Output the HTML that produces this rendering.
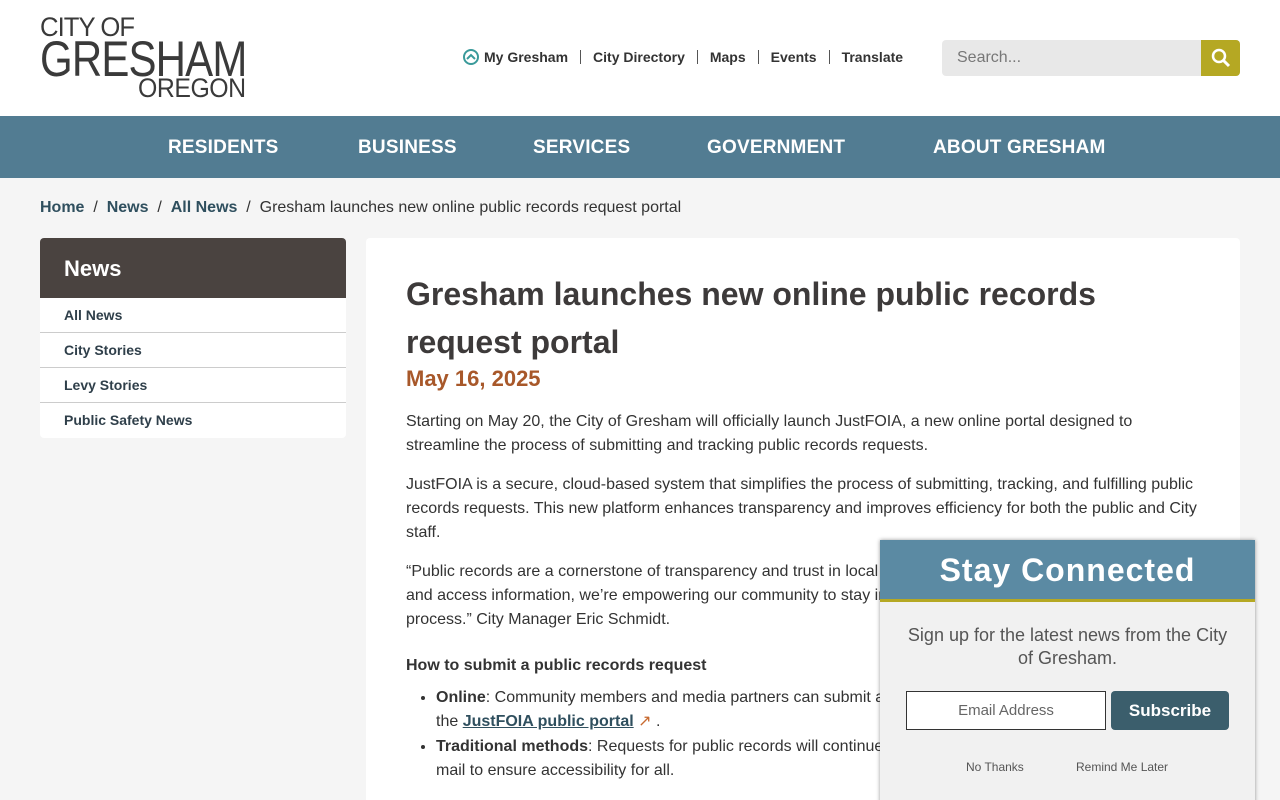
<!DOCTYPE html>
<html><head><meta charset="utf-8"><style>
*{margin:0;padding:0;box-sizing:border-box}
html,body{width:1280px;height:800px;overflow:hidden}
body{background:#f5f5f5;font-family:"Liberation Sans",sans-serif;color:#333;position:relative}
header{height:116px;background:#fff;position:relative}
.logo{position:absolute;left:40px;top:14px;color:#3a3a3a;line-height:1;width:220px}
.logo div{transform-origin:left top;white-space:nowrap}
.util{position:absolute;left:463px;top:49px;font-size:14px;font-weight:bold;color:#333;display:flex;align-items:center}
.util span{padding:0 12px;border-left:1px solid #555;line-height:14px}
.util span:first-child{border:none;padding-left:0}
.search{position:absolute;left:942px;top:40px;width:298px;height:36px;background:#e8e8e8;border-radius:4px}
.search .ph{position:absolute;left:15px;top:9px;color:#777;font-size:16px}
.search .btn{position:absolute;right:0;top:0;width:39px;height:36px;background:#b5a823;border-radius:0 4px 4px 0}
nav{height:62px;background:#527c92;position:relative;color:#fff;font-weight:bold;font-size:19px;letter-spacing:.2px}
nav span{position:absolute;top:0;line-height:64px;white-space:nowrap}
.bc{position:absolute;top:199px;left:40px;font-size:16px;color:#333}
.bc b{color:#2f4f5e}
.side{position:absolute;left:40px;top:238px;width:306px;background:#fff;border-radius:4px;overflow:hidden}
.side h3{background:#4a4340;color:#fff;height:60px;line-height:62px;padding-left:24px;font-size:22px}
.side div{height:35px;line-height:34px;padding-left:24px;font-size:14px;font-weight:bold;color:#2f3f4a;border-bottom:1px solid #ccc}
.side div:last-child{border:none}
.main{position:absolute;left:366px;top:238px;width:874px;height:600px;background:#fff;border-radius:4px;padding:32px 40px}
h1{font-size:32px;line-height:48px;color:#3d3a3a;font-weight:bold;margin-top:0}
.date{color:#a8582a;font-weight:bold;font-size:22px;margin-top:0}
p{font-size:16px;line-height:24px;margin-top:15px;color:#333}
p.first{margin-top:18px}
h4{font-size:16px;margin-top:25px;color:#333}
ul{margin-top:11px;padding-left:30px;font-size:16px;line-height:24px}
li{margin-bottom:1px}
.pop{position:absolute;left:880px;top:540px;width:375px;height:270px;background:#f1f1f1;box-shadow:0 0 4px rgba(0,0,0,.4)}
.pop .hd{height:62px;background:#5b8aa3;border-bottom:3px solid #b5a823;color:#fff;font-size:32px;font-weight:bold;text-align:center;line-height:60px;letter-spacing:1px}
.pop .t{text-align:center;color:#555;font-size:18px;line-height:23px;margin-top:22px;padding:0 20px}
.em{position:absolute;left:26px;top:151px;width:200px;height:39px;background:#fff;border:1px solid #333;text-align:center;line-height:37px;color:#666;font-size:15px}
.sub{position:absolute;left:231px;top:151px;width:118px;height:39px;background:#3b5e6c;border-radius:4px;color:#fff;font-weight:bold;font-size:17px;text-align:center;line-height:39px}
.lk{position:absolute;top:220px;font-size:12px;color:#555}
</style></head><body>
<header>
<div class="logo">
<div style="font-size:27px;letter-spacing:-1px;transform:scaleX(.95)">CITY OF</div>
<div style="font-size:50px;letter-spacing:-1px;margin-top:-7px;transform:scaleX(.84)">GRESHAM</div>
<div style="font-size:27px;margin-left:98px;margin-top:-9px;letter-spacing:-.5px;transform:scaleX(.92)">OREGON</div>
</div>
<div class="util"><span><svg width="16" height="16" viewBox="0 0 16 16" style="vertical-align:-3px;margin-right:5px"><circle cx="8" cy="8" r="7" fill="none" stroke="#3a9a9a" stroke-width="2"/><path d="M4 10l4-4 4 4" fill="none" stroke="#3a9a9a" stroke-width="2"/></svg>My Gresham</span><span>City Directory</span><span>Maps</span><span>Events</span><span>Translate</span></div>
<div class="search"><div class="ph">Search...</div><div class="btn"><svg width="39" height="36" viewBox="0 0 39 36"><circle cx="18" cy="16" r="6" fill="none" stroke="#fff" stroke-width="2.5"/><path d="M22 20l6 6" stroke="#fff" stroke-width="3"/></svg></div></div>
</header>
<nav><span style="left:168px">RESIDENTS</span><span style="left:358px">BUSINESS</span><span style="left:533px">SERVICES</span><span style="left:707px">GOVERNMENT</span><span style="left:933px">ABOUT GRESHAM</span></nav>
<div class="bc"><b>Home</b> &nbsp;/ &nbsp;<b>News</b> &nbsp;/ &nbsp;<b>All News</b> &nbsp;/ &nbsp;Gresham launches new online public records request portal</div>
<div class="side"><h3>News</h3><div>All News</div><div>City Stories</div><div>Levy Stories</div><div>Public Safety News</div></div>
<div class="main">
<h1>Gresham launches new online public records request portal</h1>
<div class="date">May 16, 2025</div>
<p class="first">Starting on May 20, the City of Gresham will officially launch JustFOIA, a new online portal designed to streamline the process of submitting and tracking public records requests.</p>
<p>JustFOIA is a secure, cloud-based system that simplifies the process of submitting, tracking, and fulfilling public records requests. This new platform enhances transparency and improves efficiency for both the public and City staff.</p>
<p>“Public records are a cornerstone of transparency and trust in local government. By making it easier to request and access information, we’re empowering our community to stay informed and engaged in the democratic process.” City Manager Eric Schmidt.</p>
<h4>How to submit a public records request</h4>
<ul><li><b>Online</b>: Community members and media partners can submit and track public records requests through<br>the <b style="color:#2f4f5e;text-decoration:underline">JustFOIA public portal</b> <span style="color:#c86a30">↗</span> .</li>
<li><b>Traditional methods</b>: Requests for public records will continue to be accepted in person, by phone, and by mail to ensure accessibility for all.</li></ul>
</div>
<div class="pop"><div class="hd">Stay Connected</div>
<div class="t">Sign up for the latest news from the City of Gresham.</div>
<div class="em">Email Address</div><div class="sub">Subscribe</div>
<div class="lk" style="left:86px">No Thanks</div><div class="lk" style="left:196px">Remind Me Later</div></div>
</body></html>
